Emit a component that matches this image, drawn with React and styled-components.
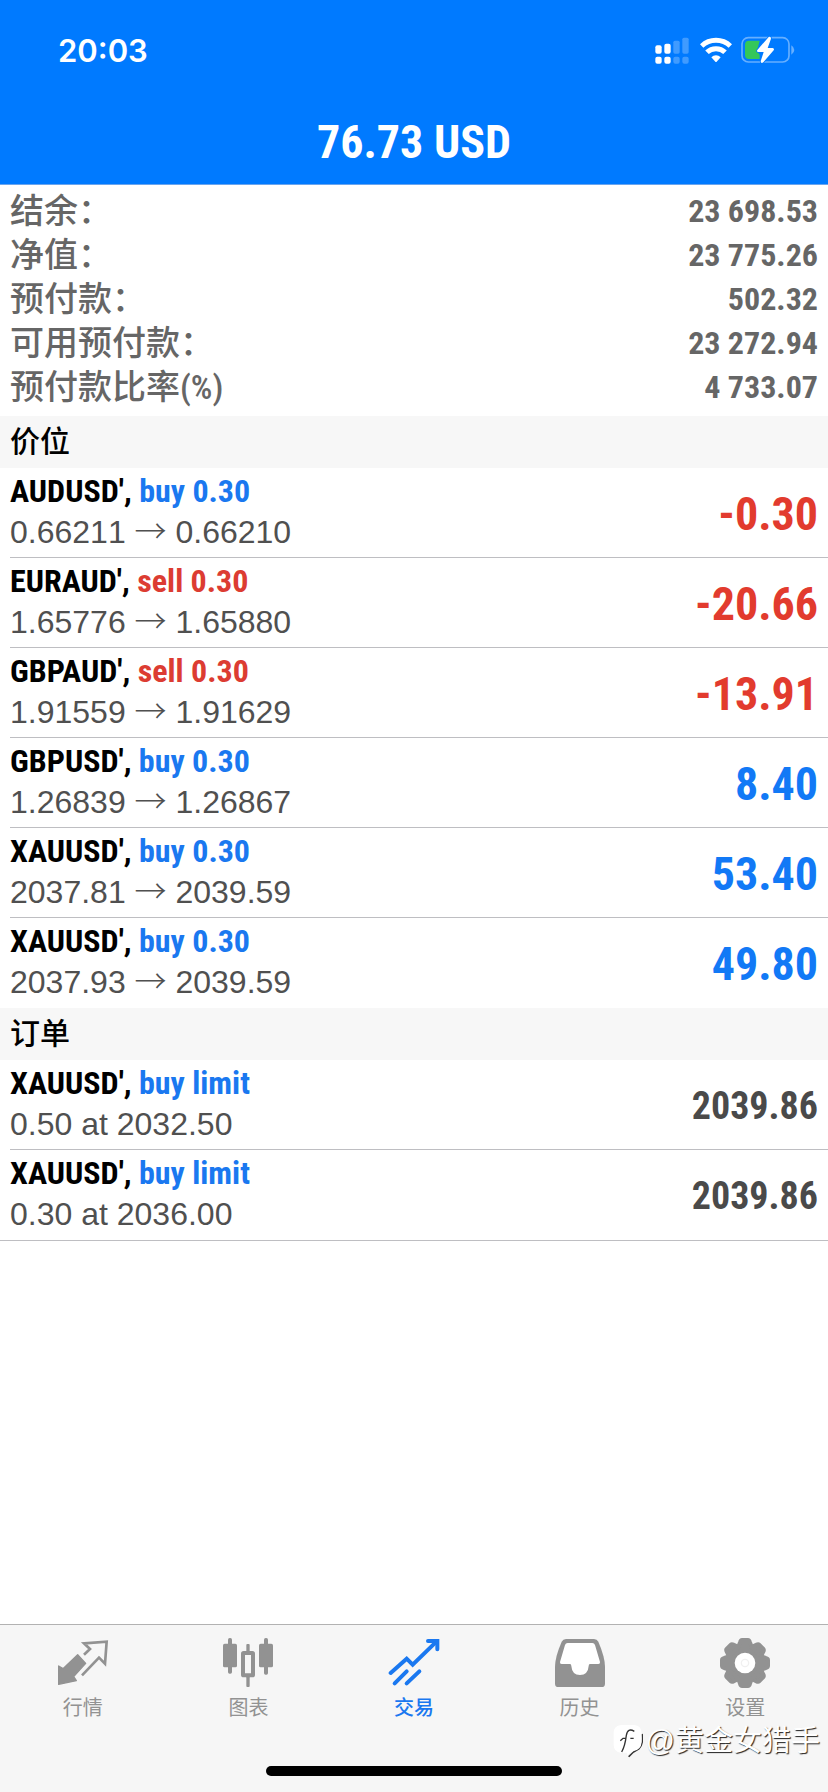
import React from "react";
import styled, { createGlobalStyle } from "styled-components";

const account = [
  { label: "结余：", value: "23 698.53" },
  { label: "净值：", value: "23 775.26" },
  { label: "预付款：", value: "502.32" },
  { label: "可用预付款：", value: "23 272.94" },
  { label: "预付款比率(%)", value: "4 733.07" },
];

const positions = [
  { symbol: "AUDUSD'", side: "buy", volume: "0.30", open: "0.66211", current: "0.66210", profit: "-0.30" },
  { symbol: "EURAUD'", side: "sell", volume: "0.30", open: "1.65776", current: "1.65880", profit: "-20.66" },
  { symbol: "GBPAUD'", side: "sell", volume: "0.30", open: "1.91559", current: "1.91629", profit: "-13.91" },
  { symbol: "GBPUSD'", side: "buy", volume: "0.30", open: "1.26839", current: "1.26867", profit: "8.40" },
  { symbol: "XAUUSD'", side: "buy", volume: "0.30", open: "2037.81", current: "2039.59", profit: "53.40" },
  { symbol: "XAUUSD'", side: "buy", volume: "0.30", open: "2037.93", current: "2039.59", profit: "49.80" },
];

const orders = [
  { symbol: "XAUUSD'", type: "buy limit", detail: "0.50 at 2032.50", price: "2039.86" },
  { symbol: "XAUUSD'", type: "buy limit", detail: "0.30 at 2036.00", price: "2039.86" },
];

const SignalIcon = () => (
  <svg width="34" height="27" viewBox="0 0 102 81" fill="#fff" aria-hidden="true">
    <rect x="1" y="25" width="19" height="25" rx="6" />
    <rect x="28" y="20" width="19" height="30" rx="6" />
    <rect x="1" y="59" width="19" height="21" rx="6" />
    <rect x="28" y="59" width="19" height="21" rx="6" />
    <g opacity="0.25">
      <rect x="55" y="11" width="19" height="39" rx="5" />
      <rect x="82" y="2" width="19" height="48" rx="5" />
      <rect x="55" y="59" width="19" height="21" rx="6" />
      <rect x="82" y="59" width="19" height="21" rx="6" />
    </g>
  </svg>
);

const WifiIcon = () => (
  <svg width="32" height="26" viewBox="0 0 96 78" aria-hidden="true">
    <g fill="none" stroke="#fff" strokeWidth="15">
      <path d="M5 27Q23 10 48 10Q73 10 91 27" />
      <path d="M21 46Q32 35 48 35Q64 35 75 46" />
    </g>
    <path d="M34 61Q40 55 48 55Q56 55 62 61L50 74Q48 76 46 74Z" fill="#fff" />
  </svg>
);

const BatteryIcon = () => (
  <svg width="54" height="28" viewBox="0 0 162 84" aria-hidden="true">
    <rect x="3" y="5" width="141" height="73" rx="19" fill="none" stroke="#fff" strokeOpacity="0.4" strokeWidth="5" />
    <path d="M151 28Q160 34 160 42Q160 50 151 56Z" fill="#fff" fillOpacity="0.4" />
    <path d="M24 14H56L48 46L56 56V69H24Q12 69 12 57V26Q12 14 24 14Z" fill="#34c759" />
    <path
      d="M83 3L49 42Q46 48 52 48H68L59 76Q60 84 67 79L98 43Q101 37 95 36H80L90 8Q90 0 83 3Z"
      fill="#fff"
      stroke="#007aff"
      strokeWidth="5"
      paintOrder="stroke"
    />
  </svg>
);

const QuotesIcon = () => (
  <svg viewBox="0 0 156 156" aria-hidden="true">
    <path
      d="M62 53L86 79L50 119L58 131L5 142V87L18 95Z"
      fill="currentColor"
      stroke="currentColor"
      strokeWidth="4"
      strokeLinejoin="round"
    />
    <path d="M81 53L99 36L81 19L149 14L144 80L126 62L75 115" fill="none" stroke="currentColor" strokeWidth="8" />
  </svg>
);

const ChartIcon = () => (
  <svg viewBox="0 0 156 156" fill="currentColor" aria-hidden="true">
    <rect x="3" y="20" width="42" height="71" rx="5" />
    <rect x="18" y="3" width="12" height="107" rx="5" />
    <rect x="63" y="48" width="30" height="67" rx="2" fill="none" stroke="currentColor" strokeWidth="12" />
    <rect x="73" y="21" width="10" height="26" rx="3" />
    <rect x="73" y="118" width="10" height="32" rx="3" />
    <rect x="111" y="20" width="42" height="71" rx="5" />
    <rect x="126" y="3" width="12" height="110" rx="5" />
  </svg>
);

const TradeIcon = () => (
  <svg
    viewBox="0 0 156 156"
    fill="none"
    stroke="currentColor"
    strokeWidth="12"
    strokeLinecap="round"
    aria-hidden="true"
  >
    <path d="M8 108L56 65L74 83L146 13" />
    <path d="M120 12H148V37" />
    <path d="M20 139L56 103M56 139L94 103" />
  </svg>
);

const HistoryIcon = () => (
  <svg viewBox="0 0 156 156" aria-hidden="true">
    <path
      d="M36 6H120Q129 6 133 14Q153 60 153 90V140Q153 150 143 150H13Q3 150 3 140V90Q3 60 23 14Q27 6 36 6Z"
      fill="currentColor"
    />
    <path
      d="M41 18H115Q121 18 123 24L138 75Q139 81 133 81H108Q104 81 104 87Q102 114 78 114Q54 114 52 87Q52 81 48 81H23Q17 81 18 75L33 24Q35 18 41 18Z"
      fill="#fff"
    />
  </svg>
);

const SettingsIcon = () => (
  <svg viewBox="-78 -78 156 156" aria-hidden="true">
    <circle r="56" fill="currentColor" />
    {[0, 45, 90, 135, 180, 225, 270, 315].map((angle) => (
      <path
        key={angle}
        d="M-9 -69H9Q13 -69 15 -62L20 -48H-20L-15 -62Q-13 -69 -9 -69Z"
        transform={`rotate(${angle})`}
        fill="currentColor"
        stroke="currentColor"
        strokeWidth="12"
        strokeLinejoin="round"
      />
    ))}
    <circle r="31" fill="#fff" />
    <circle r="11" fill="none" stroke="#f0f0f0" strokeWidth="4" />
  </svg>
);

const WatermarkLogo = () => (
  <svg width="30" height="34" viewBox="0 0 90 102" aria-hidden="true">
    <path d="M87 30Q92 60 78 74Q60 82 47 98" fill="none" stroke="#333" strokeWidth="5" />
    <path d="M24 3H64Q86 5 86 30V54Q84 78 62 81Q48 86 44 95L42 86H24Q2 84 2 62V26Q3 5 24 3Z" fill="#fff" />
    <path d="M64 22Q44 10 40 34Q36 66 26 84M22 50L30 43H40M52 43H62" fill="none" stroke="#333" strokeWidth="4" />
  </svg>
);

const tabs = [
  { name: "行情", icon: QuotesIcon },
  { name: "图表", icon: ChartIcon },
  { name: "交易", icon: TradeIcon, active: true },
  { name: "历史", icon: HistoryIcon },
  { name: "设置", icon: SettingsIcon },
];

const App = () => {
  return (
    <Container>
      <GlobalStyle />
      <Header>
        <StatusBar>
          <Clock>20:03</Clock>
          <Indicators>
            <SignalIcon />
            <WifiIcon />
            <BatteryIcon />
          </Indicators>
        </StatusBar>
        <Title>76.73 USD</Title>
      </Header>

      <main>
        <Summary>
          {account.map((item) => (
            <SummaryRow key={item.label}>
              <dt>{item.label}</dt>
              <dd>{item.value}</dd>
            </SummaryRow>
          ))}
        </Summary>

        <SectionTitle>价位</SectionTitle>
        <List>
          {positions.map((item, index) => (
            <Row key={index}>
              <div>
                <Symbol>
                  {item.symbol},{" "}
                  <Side $sell={item.side === "sell"}>
                    {item.side} {item.volume}
                  </Side>
                </Symbol>
                <Detail>
                  {item.open} <Arrow>→</Arrow> {item.current}
                </Detail>
              </div>
              <Profit $loss={item.profit.startsWith("-")}>{item.profit}</Profit>
            </Row>
          ))}
        </List>

        <SectionTitle>订单</SectionTitle>
        <List $closed>
          {orders.map((item, index) => (
            <Row key={index}>
              <div>
                <Symbol>
                  {item.symbol}, <Side>{item.type}</Side>
                </Symbol>
                <Detail>{item.detail}</Detail>
              </div>
              <Price>{item.price}</Price>
            </Row>
          ))}
        </List>
      </main>

      <Footer>
        <TabBar>
          {tabs.map(({ name, icon: Icon, active }) => (
            <Tab key={name} type="button" $active={active} aria-current={active ? "page" : undefined}>
              <Icon />
              <span>{name}</span>
            </Tab>
          ))}
        </TabBar>
        <HomeIndicator />
        <Watermark>
          <WatermarkLogo />
          <span>@黄金女猎手</span>
        </Watermark>
      </Footer>
    </Container>
  );
};

export default App;

const GlobalStyle = createGlobalStyle`
  * {
    box-sizing: border-box;
  }

  body {
    margin: 0;
    background-color: #fff;
    font-family: "Liberation Sans", "Noto Sans CJK SC", sans-serif;
  }
`;

const condensed = `"Roboto Condensed", "Liberation Sans", "Noto Sans CJK SC", sans-serif`;

const Container = styled.div`
  min-height: 100vh;
  display: flex;
  flex-direction: column;
`;

const Header = styled.header`
  background-color: #007aff;
  border-bottom: 1px solid #6aa5ee;
  color: #fff;
`;

const StatusBar = styled.div`
  height: 100px;
  padding: 0 33px 0 58px;
  display: flex;
  align-items: center;
  justify-content: space-between;
`;

const Clock = styled.span`
  font-family: Inter, sans-serif;
  font-size: 31px;
  font-weight: 600;
`;

const Indicators = styled.div`
  display: flex;
  align-items: center;
  gap: 11px;

  svg:last-child {
    margin-left: -2px;
  }
`;

const Title = styled.h1`
  margin: 0;
  padding: 14px 0;
  font-family: ${condensed};
  font-size: 46px;
  line-height: 56px;
  font-weight: 700;
  text-align: center;
`;

const Summary = styled.dl`
  margin: 0;
  padding: 4px 10px 7px;
`;

const SummaryRow = styled.div`
  display: flex;
  justify-content: space-between;
  line-height: 44px;
  color: #666;
  font-family: ${condensed};

  dt {
    font-size: 34px;
    font-weight: 500;
  }

  dd {
    margin: 0;
    font-size: 32px;
    font-weight: 700;
  }
`;

const SectionTitle = styled.h2`
  margin: 0;
  padding: 0 10px;
  background-color: #f7f7f7;
  font-family: "Liberation Sans", "Noto Sans CJK SC", sans-serif;
  font-size: 30px;
  line-height: 52px;
  font-weight: 500;
  color: #000;
`;

const List = styled.ul`
  margin: 0;
  padding: 0 0 0 10px;
  list-style: none;
  border-bottom: ${(props) => (props.$closed ? "1px solid #bebec2" : "none")};
`;

const Row = styled.li`
  height: 90px;
  padding: 0 10px 2px 0;
  display: flex;
  align-items: center;
  justify-content: space-between;
  border-bottom: 1px solid #bebec2;

  &:last-child {
    border-bottom: none;
  }
`;

const Symbol = styled.div`
  font-family: ${condensed};
  font-size: 32px;
  line-height: 41px;
  font-weight: 700;
  color: #000;
`;

const Side = styled.span`
  color: ${(props) => (props.$sell ? "#dc3c32" : "#1a78f0")};
`;

const Detail = styled.div`
  font-size: 32px;
  line-height: 41px;
  font-kerning: none;
  color: #505050;
`;

const Arrow = styled.span`
  font-family: "Noto Sans CJK SC", sans-serif;
  font-weight: 300;
  line-height: 1;
`;

const Profit = styled.div`
  padding-top: 4px;
  font-family: ${condensed};
  font-size: 46px;
  line-height: 56px;
  font-weight: 700;
  color: ${(props) => (props.$loss ? "#e23b2e" : "#1279f6")};
`;

const Price = styled.div`
  padding-top: 4px;
  font-family: ${condensed};
  font-size: 38px;
  line-height: 48px;
  font-weight: 700;
  color: #4a4a4a;
`;

const Footer = styled.footer`
  position: relative;
  margin-top: auto;
  padding-bottom: 16px;
  background-color: #f6f6f6;
  border-top: 1px solid #b2b2b2;
`;

const TabBar = styled.nav`
  display: flex;
`;

const Tab = styled.button`
  flex: 1;
  padding: 12px 0 0;
  display: flex;
  flex-direction: column;
  align-items: center;
  gap: 4px;
  border: none;
  background: none;
  color: ${(props) => (props.$active ? "#1a78f0" : "#929292")};
  font-family: "Liberation Sans", "Noto Sans CJK SC", sans-serif;
  font-size: 20px;
  line-height: 30px;
  font-weight: ${(props) => (props.$active ? 500 : 400)};
  cursor: pointer;

  svg {
    width: 52px;
    height: 52px;
  }
`;

const HomeIndicator = styled.div`
  width: 296px;
  height: 10px;
  margin: 43px auto 0;
  border-radius: 5px;
  background-color: #000;
`;

const Watermark = styled.div`
  position: absolute;
  right: 8px;
  bottom: 33px;
  display: flex;
  align-items: center;
  gap: 3px;
  color: #fff;
  font-family: "Liberation Sans", "Noto Sans CJK SC", sans-serif;
  font-size: 29px;
  line-height: 36px;
  text-shadow: 1px 1px 1px #222;
`;
